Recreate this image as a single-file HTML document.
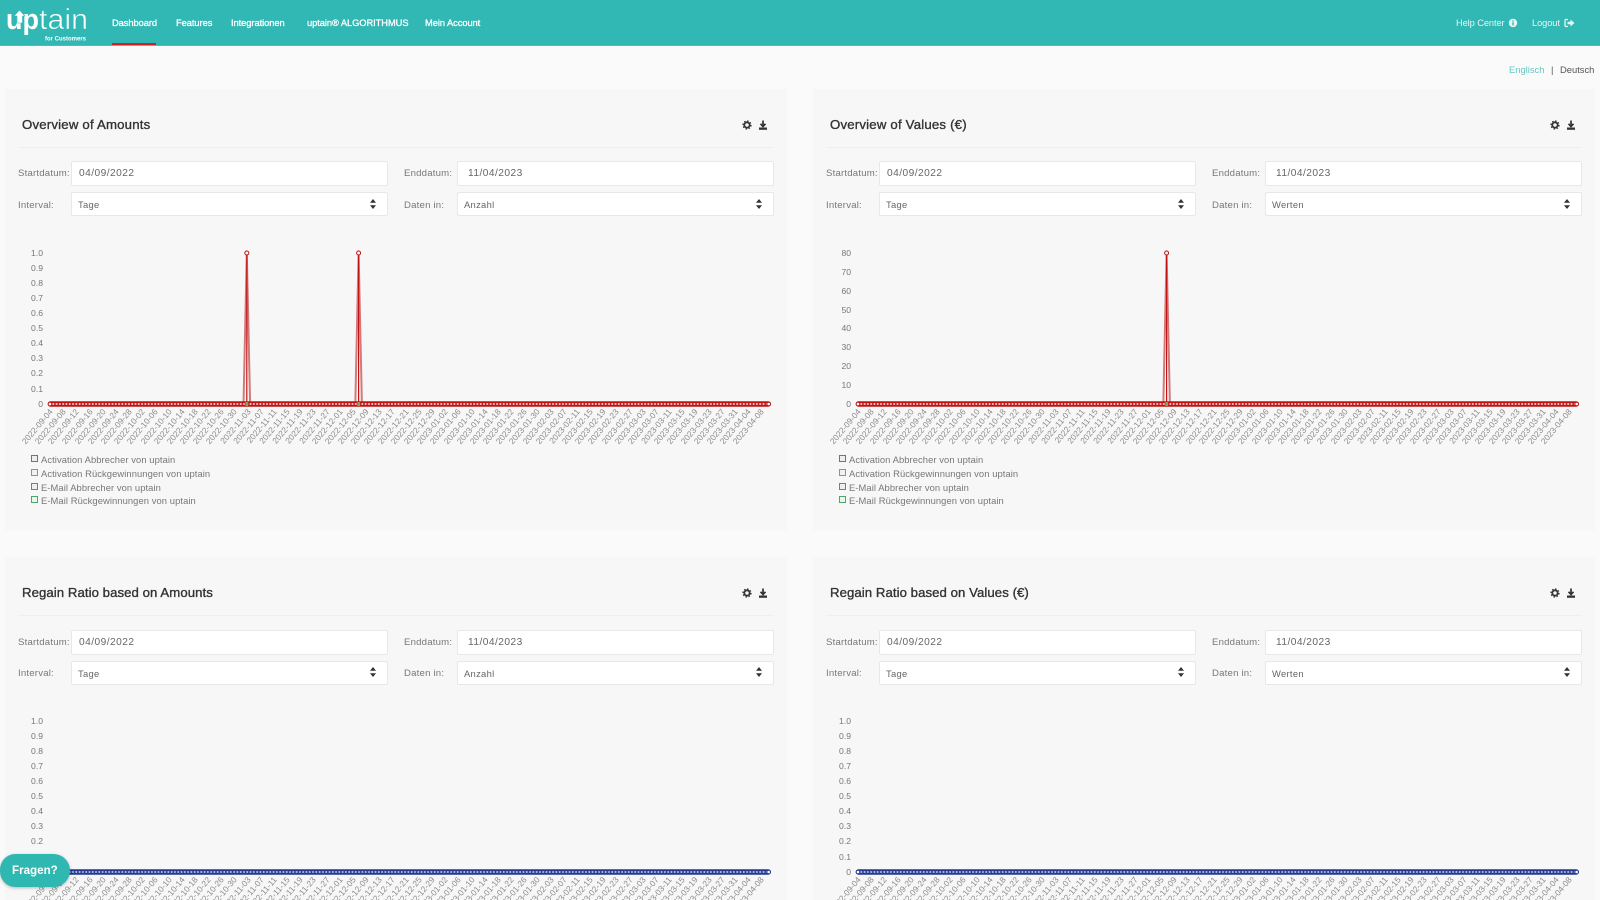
<!DOCTYPE html>
<html><head><meta charset="utf-8"><title>uptain Dashboard</title>
<style>
*{box-sizing:border-box}
html,body{margin:0;width:1600px;height:900px;overflow:hidden;background:#fafafa}
body{font-family:"Liberation Sans",sans-serif;color:#666;position:relative}
#w{position:absolute;left:0;top:0;width:1600px;height:900px;overflow:hidden;filter:blur(.35px)}
.nav{position:absolute;left:0;top:0;width:1600px;height:46px;background:#31b8b4;border-bottom:1px solid #3dc4bf}
.nav a{position:absolute;top:17px;font-size:9.3px;line-height:13px;color:#fff;white-space:nowrap;-webkit-text-stroke:.3px #fff;letter-spacing:-.05px}
.nav a.l{-webkit-text-stroke:0;color:#e4f6f5;font-size:9.3px;letter-spacing:-.1px}
.ul{position:absolute;left:112px;top:43px;width:44px;height:2px;background:#c22}
.lang{position:absolute;top:63px;font-size:9.4px;line-height:13px;white-space:nowrap}
.p{position:absolute;width:782px;background:#f7f7f7}
.p>*{position:absolute}
.t{left:17px;top:26px;font-size:13.2px;line-height:20px;color:#333;white-space:nowrap;-webkit-text-stroke:.35px #333;letter-spacing:.2px}
.q .t{top:26px;letter-spacing:.06px}
.q .f{margin-top:.6px}
.q .r2{line-height:23px}
.q .lb{margin-top:.8px}
.q .lb.u{margin-top:0}
.d{left:13px;top:58px;width:756px;height:1px;background:#efefef}
.f{width:317px;height:25px;background:#fff;border:1px solid #e8e8e8;border-radius:2px;font-size:10.2px;line-height:24px;color:#666;letter-spacing:.45px}
.a{left:66px}.b{left:452px}
.r1{top:72px;padding-left:7px}.b.r1{padding-left:10px}
.r2{top:103px;height:24px;padding-left:6px;font-size:9.4px;line-height:24px;letter-spacing:.3px}
.lb{font-size:9.6px;line-height:13px;color:#777;white-space:nowrap;letter-spacing:.2px}
.lb.u{top:110px}
.y{left:8px;width:30px;text-align:right;font-size:8.6px;line-height:10px;color:#777}
.x{left:32.84px;top:316px;display:flex;height:10px}
.x i{flex:none;display:block;width:60px;margin-left:-46.84px;height:10px;font-style:normal;font-size:8.4px;line-height:10px;color:#8c8c8c;text-align:right;white-space:nowrap;transform-origin:100% 50%;transform:rotate(-50deg)}
.s{left:26px;width:7px;height:7px;border:1px solid;background:#f3eeee}
.g{left:36px;font-size:9.4px;line-height:13px;color:#777;white-space:nowrap;letter-spacing:.08px}
.c{left:0;top:0;overflow:visible}
.fr{position:absolute;left:0;top:854px;width:70px;height:33px;background:#2fb8b2;border-radius:16px 17px 17px 16px;color:#fff;font-weight:bold;font-size:11.6px;line-height:33px;padding-left:12px;box-shadow:0 1px 3px rgba(0,0,0,.25)}
</style></head><body><div id="w">
<svg width="0" height="0" style="position:absolute"><defs>
<pattern id="r" patternUnits="userSpaceOnUse" width="3.288" height="10" patternTransform="translate(43.356,310)"><circle cx="1.644" cy="5" r="1.05" fill="#f3d0d0"/></pattern>
<pattern id="u" patternUnits="userSpaceOnUse" width="3.288" height="10" patternTransform="translate(43.356,310)"><circle cx="1.644" cy="5" r="1.05" fill="#b4bde6"/></pattern>
</defs></svg>

<div class="nav">
<svg style="position:absolute;left:0;top:0" width="100" height="45"><text x="6" y="29" font-family="Liberation Sans" font-size="29" font-weight="bold" fill="#fff" textLength="33" lengthAdjust="spacingAndGlyphs">up</text><text x="39" y="29" font-family="Liberation Sans" font-size="29" fill="#fff" stroke="#31b8b4" stroke-width=".6" textLength="49" lengthAdjust="spacingAndGlyphs">tain</text><polygon points="19.500,10 25,16 22.500,16 22.500,23 17,23 17,16 14,16" fill="#fff" stroke="#31b8b4" stroke-width=".6"/><text x="45" y="40.500" font-family="Liberation Sans" font-size="6" font-weight="bold" fill="#fff">for Customers</text></svg>
<a style="left:112px">Dashboard</a><a style="left:176px">Features</a><a style="left:231px">Integrationen</a><a style="left:307px">uptain® ALGORITHMUS</a><a style="left:425px">Mein Account</a>
<a class="l" style="left:1456px">Help Center</a>
<svg style="position:absolute;left:1508px;top:18px" width="10" height="10"><circle cx="5" cy="5" r="4.2" fill="#e4f6f5"/><rect x="4.3" y="4.2" width="1.4" height="3.2" fill="#31b8b4"/><rect x="4.3" y="2.4" width="1.4" height="1.2" fill="#31b8b4"/></svg>
<a class="l" style="left:1532px">Logout</a>
<svg style="position:absolute;left:1564px;top:18px" width="11" height="10"><path d="M4 1.5H2Q1 1.500 1 2.500V7.500Q1 8.500 2 8.500H4" fill="none" stroke="#e4f6f5" stroke-width="1.3"/><path d="M3.500 3.800H6.500V1.500L10.500 5 6.500 8.500V6.200H3.500Z" fill="#e4f6f5"/></svg>
<div class="ul"></div>
</div>

<span class="lang" style="left:1509px;color:#68c6c2">Englisch</span><span class="lang" style="left:1551px;color:#555">|</span><span class="lang" style="left:1560px;color:#555">Deutsch</span>

<div class="p" style="left:5px;top:89px;height:441px">
<div class="t">Overview of Amounts</div>
<svg style="left:737px;top:30px" width="26" height="12"><circle cx="5" cy="6" r="2.7" fill="none" stroke="#333" stroke-width="1.8"/><circle cx="5" cy="6" r="4" fill="none" stroke="#333" stroke-width="1.300" stroke-dasharray="1.500 1.640"/><path d="M21 1.500V6.500M18.500 4.800 21 7.500 23.500 4.800" fill="none" stroke="#333" stroke-width="1.700"/><rect x="17" y="8.500" width="8" height="2.300" fill="#333"/></svg>
<div class="d"></div>
<span class="lb" style="left:13px;top:78px">Startdatum:</span><div class="f a r1">04/09/2022</div>
<span class="lb" style="left:399px;top:78px">Enddatum:</span><div class="f b r1">11/04/2023</div>
<span class="lb u" style="left:13px">Interval:</span><div class="f a r2">Tage</div>
<span class="lb u" style="left:399px">Daten in:</span><div class="f b r2">Anzahl</div>
<svg style="left:364px;top:110px" width="8" height="10"><path d="M4 0 7 3.800H1ZM4 10 1 6.200H7Z" fill="#333"/></svg>
<svg style="left:750px;top:110px" width="8" height="10"><path d="M4 0 7 3.800H1ZM4 10 1 6.200H7Z" fill="#333"/></svg>
<span class="y" style="top:159px">1.0</span><span class="y" style="top:174px">0.9</span><span class="y" style="top:189px">0.8</span><span class="y" style="top:204px">0.7</span><span class="y" style="top:219px">0.6</span><span class="y" style="top:234px">0.5</span><span class="y" style="top:249px">0.4</span><span class="y" style="top:264px">0.3</span><span class="y" style="top:279px">0.2</span><span class="y" style="top:295px">0.1</span><span class="y" style="top:310px">0</span>
<svg class="c" width="782" height="340"><path d="M238.500 315 241.800 164 245.100 315M350.300 315 353.600 164 356.900 315" fill="none" stroke="#d27a7a" stroke-width="2"/><path d="M241.800 315V164M353.600 315V164" fill="none" stroke="#c01414" stroke-width="1.200"/><rect x="42.700" y="312.300" width="723.300" height="5.400" rx="2.700" fill="#c01414"/><rect x="43.400" y="310" width="721.900" height="10" fill="url(#r)"/><circle cx="45" cy="315" r="1.800" fill="#fff" stroke="#c01414"/><circle cx="763.700" cy="315" r="1.800" fill="#fff" stroke="#c01414"/><circle cx="241.800" cy="164" r="2" fill="#f7f7f7" stroke="#c01414"/><circle cx="353.600" cy="164" r="2" fill="#f7f7f7" stroke="#c01414"/><rect x="240.500" y="313" width="2.600" height="4" fill="#7da36a"/><rect x="352.300" y="313" width="2.600" height="4" fill="#7da36a"/></svg>
<div class="x"><i>2022-09-04</i><i>2022-09-08</i><i>2022-09-12</i><i>2022-09-16</i><i>2022-09-20</i><i>2022-09-24</i><i>2022-09-28</i><i>2022-10-02</i><i>2022-10-06</i><i>2022-10-10</i><i>2022-10-14</i><i>2022-10-18</i><i>2022-10-22</i><i>2022-10-26</i><i>2022-10-30</i><i>2022-11-03</i><i>2022-11-07</i><i>2022-11-11</i><i>2022-11-15</i><i>2022-11-19</i><i>2022-11-23</i><i>2022-11-27</i><i>2022-12-01</i><i>2022-12-05</i><i>2022-12-09</i><i>2022-12-13</i><i>2022-12-17</i><i>2022-12-21</i><i>2022-12-25</i><i>2022-12-29</i><i>2023-01-02</i><i>2023-01-06</i><i>2023-01-10</i><i>2023-01-14</i><i>2023-01-18</i><i>2023-01-22</i><i>2023-01-26</i><i>2023-01-30</i><i>2023-02-03</i><i>2023-02-07</i><i>2023-02-11</i><i>2023-02-15</i><i>2023-02-19</i><i>2023-02-23</i><i>2023-02-27</i><i>2023-03-03</i><i>2023-03-07</i><i>2023-03-11</i><i>2023-03-15</i><i>2023-03-19</i><i>2023-03-23</i><i>2023-03-27</i><i>2023-03-31</i><i>2023-04-04</i><i>2023-04-08</i></div>
<span class="s" style="top:366px;border-color:#b5565f"></span><span class="g" style="top:364px">Activation Abbrecher von uptain</span>
<span class="s" style="top:380px;border-color:#7da36a;background:#eff3ec"></span><span class="g" style="top:378px">Activation Rückgewinnungen von uptain</span>
<span class="s" style="top:394px;border-color:#d0566f"></span><span class="g" style="top:392px">E-Mail Abbrecher von uptain</span>
<span class="s" style="top:407px;border-color:#4aa86a;background:#ecf4ee"></span><span class="g" style="top:405px">E-Mail Rückgewinnungen von uptain</span>
</div>

<div class="p" style="left:813px;top:89px;height:441px">
<div class="t">Overview of Values (€)</div>
<svg style="left:737px;top:30px" width="26" height="12"><circle cx="5" cy="6" r="2.7" fill="none" stroke="#333" stroke-width="1.8"/><circle cx="5" cy="6" r="4" fill="none" stroke="#333" stroke-width="1.300" stroke-dasharray="1.500 1.640"/><path d="M21 1.500V6.500M18.500 4.800 21 7.500 23.500 4.800" fill="none" stroke="#333" stroke-width="1.700"/><rect x="17" y="8.500" width="8" height="2.300" fill="#333"/></svg>
<div class="d"></div>
<span class="lb" style="left:13px;top:78px">Startdatum:</span><div class="f a r1">04/09/2022</div>
<span class="lb" style="left:399px;top:78px">Enddatum:</span><div class="f b r1">11/04/2023</div>
<span class="lb u" style="left:13px">Interval:</span><div class="f a r2">Tage</div>
<span class="lb u" style="left:399px">Daten in:</span><div class="f b r2">Werten</div>
<svg style="left:364px;top:110px" width="8" height="10"><path d="M4 0 7 3.800H1ZM4 10 1 6.200H7Z" fill="#333"/></svg>
<svg style="left:750px;top:110px" width="8" height="10"><path d="M4 0 7 3.800H1ZM4 10 1 6.200H7Z" fill="#333"/></svg>
<span class="y" style="top:159px">80</span><span class="y" style="top:178px">70</span><span class="y" style="top:197px">60</span><span class="y" style="top:216px">50</span><span class="y" style="top:234px">40</span><span class="y" style="top:253px">30</span><span class="y" style="top:272px">20</span><span class="y" style="top:291px">10</span><span class="y" style="top:310px">0</span>
<svg class="c" width="782" height="340"><path d="M350.300 315 353.600 164 356.900 315" fill="none" stroke="#d27a7a" stroke-width="2"/><path d="M353.600 315V164" fill="none" stroke="#c01414" stroke-width="1.200"/><rect x="42.700" y="312.300" width="723.300" height="5.400" rx="2.700" fill="#c01414"/><rect x="43.400" y="310" width="721.900" height="10" fill="url(#r)"/><circle cx="45" cy="315" r="1.800" fill="#fff" stroke="#c01414"/><circle cx="763.700" cy="315" r="1.800" fill="#fff" stroke="#c01414"/><circle cx="353.600" cy="164" r="2" fill="#f7f7f7" stroke="#c01414"/><rect x="352.300" y="313" width="2.600" height="4" fill="#7da36a"/></svg>
<div class="x"><i>2022-09-04</i><i>2022-09-08</i><i>2022-09-12</i><i>2022-09-16</i><i>2022-09-20</i><i>2022-09-24</i><i>2022-09-28</i><i>2022-10-02</i><i>2022-10-06</i><i>2022-10-10</i><i>2022-10-14</i><i>2022-10-18</i><i>2022-10-22</i><i>2022-10-26</i><i>2022-10-30</i><i>2022-11-03</i><i>2022-11-07</i><i>2022-11-11</i><i>2022-11-15</i><i>2022-11-19</i><i>2022-11-23</i><i>2022-11-27</i><i>2022-12-01</i><i>2022-12-05</i><i>2022-12-09</i><i>2022-12-13</i><i>2022-12-17</i><i>2022-12-21</i><i>2022-12-25</i><i>2022-12-29</i><i>2023-01-02</i><i>2023-01-06</i><i>2023-01-10</i><i>2023-01-14</i><i>2023-01-18</i><i>2023-01-22</i><i>2023-01-26</i><i>2023-01-30</i><i>2023-02-03</i><i>2023-02-07</i><i>2023-02-11</i><i>2023-02-15</i><i>2023-02-19</i><i>2023-02-23</i><i>2023-02-27</i><i>2023-03-03</i><i>2023-03-07</i><i>2023-03-11</i><i>2023-03-15</i><i>2023-03-19</i><i>2023-03-23</i><i>2023-03-27</i><i>2023-03-31</i><i>2023-04-04</i><i>2023-04-08</i></div>
<span class="s" style="top:366px;border-color:#b5565f"></span><span class="g" style="top:364px">Activation Abbrecher von uptain</span>
<span class="s" style="top:380px;border-color:#7da36a;background:#eff3ec"></span><span class="g" style="top:378px">Activation Rückgewinnungen von uptain</span>
<span class="s" style="top:394px;border-color:#d0566f"></span><span class="g" style="top:392px">E-Mail Abbrecher von uptain</span>
<span class="s" style="top:407px;border-color:#4aa86a;background:#ecf4ee"></span><span class="g" style="top:405px">E-Mail Rückgewinnungen von uptain</span>
</div>

<div class="p q" style="left:5px;top:557px;height:343px">
<div class="t">Regain Ratio based on Amounts</div>
<svg style="left:737px;top:30px" width="26" height="12"><circle cx="5" cy="6" r="2.7" fill="none" stroke="#333" stroke-width="1.8"/><circle cx="5" cy="6" r="4" fill="none" stroke="#333" stroke-width="1.300" stroke-dasharray="1.500 1.640"/><path d="M21 1.500V6.500M18.500 4.800 21 7.500 23.500 4.800" fill="none" stroke="#333" stroke-width="1.700"/><rect x="17" y="8.500" width="8" height="2.300" fill="#333"/></svg>
<div class="d"></div>
<span class="lb" style="left:13px;top:78px">Startdatum:</span><div class="f a r1">04/09/2022</div>
<span class="lb" style="left:399px;top:78px">Enddatum:</span><div class="f b r1">11/04/2023</div>
<span class="lb u" style="left:13px">Interval:</span><div class="f a r2">Tage</div>
<span class="lb u" style="left:399px">Daten in:</span><div class="f b r2">Anzahl</div>
<svg style="left:364px;top:110px" width="8" height="10"><path d="M4 0 7 3.800H1ZM4 10 1 6.200H7Z" fill="#333"/></svg>
<svg style="left:750px;top:110px" width="8" height="10"><path d="M4 0 7 3.800H1ZM4 10 1 6.200H7Z" fill="#333"/></svg>
<span class="y" style="top:159px">1.0</span><span class="y" style="top:174px">0.9</span><span class="y" style="top:189px">0.8</span><span class="y" style="top:204px">0.7</span><span class="y" style="top:219px">0.6</span><span class="y" style="top:234px">0.5</span><span class="y" style="top:249px">0.4</span><span class="y" style="top:264px">0.3</span><span class="y" style="top:279px">0.2</span><span class="y" style="top:295px">0.1</span><span class="y" style="top:310px">0</span>
<svg class="c" width="782" height="340"><rect x="42.700" y="312.300" width="723.300" height="5.400" rx="2.700" fill="#26398f"/><rect x="43.400" y="310" width="721.900" height="10" fill="url(#u)"/><circle cx="763.700" cy="315" r="1.800" fill="#fff" stroke="#26398f"/></svg>
<div class="x"><i>2022-09-04</i><i>2022-09-08</i><i>2022-09-12</i><i>2022-09-16</i><i>2022-09-20</i><i>2022-09-24</i><i>2022-09-28</i><i>2022-10-02</i><i>2022-10-06</i><i>2022-10-10</i><i>2022-10-14</i><i>2022-10-18</i><i>2022-10-22</i><i>2022-10-26</i><i>2022-10-30</i><i>2022-11-03</i><i>2022-11-07</i><i>2022-11-11</i><i>2022-11-15</i><i>2022-11-19</i><i>2022-11-23</i><i>2022-11-27</i><i>2022-12-01</i><i>2022-12-05</i><i>2022-12-09</i><i>2022-12-13</i><i>2022-12-17</i><i>2022-12-21</i><i>2022-12-25</i><i>2022-12-29</i><i>2023-01-02</i><i>2023-01-06</i><i>2023-01-10</i><i>2023-01-14</i><i>2023-01-18</i><i>2023-01-22</i><i>2023-01-26</i><i>2023-01-30</i><i>2023-02-03</i><i>2023-02-07</i><i>2023-02-11</i><i>2023-02-15</i><i>2023-02-19</i><i>2023-02-23</i><i>2023-02-27</i><i>2023-03-03</i><i>2023-03-07</i><i>2023-03-11</i><i>2023-03-15</i><i>2023-03-19</i><i>2023-03-23</i><i>2023-03-27</i><i>2023-03-31</i><i>2023-04-04</i><i>2023-04-08</i></div>
</div>

<div class="p q" style="left:813px;top:557px;height:343px">
<div class="t">Regain Ratio based on Values (€)</div>
<svg style="left:737px;top:30px" width="26" height="12"><circle cx="5" cy="6" r="2.7" fill="none" stroke="#333" stroke-width="1.8"/><circle cx="5" cy="6" r="4" fill="none" stroke="#333" stroke-width="1.300" stroke-dasharray="1.500 1.640"/><path d="M21 1.500V6.500M18.500 4.800 21 7.500 23.500 4.800" fill="none" stroke="#333" stroke-width="1.700"/><rect x="17" y="8.500" width="8" height="2.300" fill="#333"/></svg>
<div class="d"></div>
<span class="lb" style="left:13px;top:78px">Startdatum:</span><div class="f a r1">04/09/2022</div>
<span class="lb" style="left:399px;top:78px">Enddatum:</span><div class="f b r1">11/04/2023</div>
<span class="lb u" style="left:13px">Interval:</span><div class="f a r2">Tage</div>
<span class="lb u" style="left:399px">Daten in:</span><div class="f b r2">Werten</div>
<svg style="left:364px;top:110px" width="8" height="10"><path d="M4 0 7 3.800H1ZM4 10 1 6.200H7Z" fill="#333"/></svg>
<svg style="left:750px;top:110px" width="8" height="10"><path d="M4 0 7 3.800H1ZM4 10 1 6.200H7Z" fill="#333"/></svg>
<span class="y" style="top:159px">1.0</span><span class="y" style="top:174px">0.9</span><span class="y" style="top:189px">0.8</span><span class="y" style="top:204px">0.7</span><span class="y" style="top:219px">0.6</span><span class="y" style="top:234px">0.5</span><span class="y" style="top:249px">0.4</span><span class="y" style="top:264px">0.3</span><span class="y" style="top:279px">0.2</span><span class="y" style="top:295px">0.1</span><span class="y" style="top:310px">0</span>
<svg class="c" width="782" height="340"><rect x="42.700" y="312.300" width="723.300" height="5.400" rx="2.700" fill="#26398f"/><rect x="43.400" y="310" width="721.900" height="10" fill="url(#u)"/><circle cx="45" cy="315" r="1.800" fill="#fff" stroke="#26398f"/><circle cx="763.700" cy="315" r="1.800" fill="#fff" stroke="#26398f"/></svg>
<div class="x"><i>2022-09-04</i><i>2022-09-08</i><i>2022-09-12</i><i>2022-09-16</i><i>2022-09-20</i><i>2022-09-24</i><i>2022-09-28</i><i>2022-10-02</i><i>2022-10-06</i><i>2022-10-10</i><i>2022-10-14</i><i>2022-10-18</i><i>2022-10-22</i><i>2022-10-26</i><i>2022-10-30</i><i>2022-11-03</i><i>2022-11-07</i><i>2022-11-11</i><i>2022-11-15</i><i>2022-11-19</i><i>2022-11-23</i><i>2022-11-27</i><i>2022-12-01</i><i>2022-12-05</i><i>2022-12-09</i><i>2022-12-13</i><i>2022-12-17</i><i>2022-12-21</i><i>2022-12-25</i><i>2022-12-29</i><i>2023-01-02</i><i>2023-01-06</i><i>2023-01-10</i><i>2023-01-14</i><i>2023-01-18</i><i>2023-01-22</i><i>2023-01-26</i><i>2023-01-30</i><i>2023-02-03</i><i>2023-02-07</i><i>2023-02-11</i><i>2023-02-15</i><i>2023-02-19</i><i>2023-02-23</i><i>2023-02-27</i><i>2023-03-03</i><i>2023-03-07</i><i>2023-03-11</i><i>2023-03-15</i><i>2023-03-19</i><i>2023-03-23</i><i>2023-03-27</i><i>2023-03-31</i><i>2023-04-04</i><i>2023-04-08</i></div>
</div>

<div class="fr">Fragen?</div>
</div></body></html>
